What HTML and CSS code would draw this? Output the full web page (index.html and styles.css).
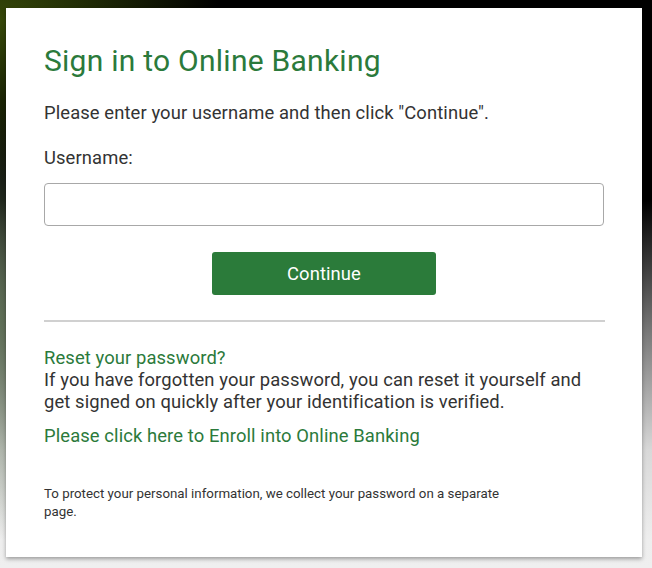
FILE: index.html
```html
<!DOCTYPE html>
<html lang="en">
<head>
<meta charset="utf-8">
<title>Sign in to Online Banking</title>
<link rel="stylesheet" href="styles.css">
</head>
<body>
<main class="card">
  <h1 class="title">Sign in to Online Banking</h1>
  <p class="intro">Please enter your username and then click "Continue".</p>
  <label class="label" for="username">Username:</label>
  <input class="field" id="username" type="text">
  <div class="actions"><button class="btn" type="button">Continue</button></div>
  <hr class="divider">
  <div class="reset">
    <a class="link" href="#">Reset your password?</a>
    <p class="reset-text">If you have forgotten your password, you can reset it yourself and get signed on quickly after your identification is verified.</p>
  </div>
  <a class="link enroll" href="#">Please click here to Enroll into Online Banking</a>
  <p class="note">To protect your personal information, we collect your password on a separate page.</p>
</main>
</body>
</html>
```
FILE: styles.css
```css
* { box-sizing: border-box; }
html, body { margin: 0; height: 100%; }
body {
  width: 652px;
  height: 568px;
  overflow: hidden;
  font-family: Roboto, "Liberation Sans", sans-serif;
  background:
    radial-gradient(ellipse 220px 160px at 0 20px, rgba(60,80,10,0.9), rgba(40,60,0,0) 100%),
    radial-gradient(ellipse 100px 220px at 0 320px, rgba(90,110,80,0.8), rgba(90,110,80,0) 100%),
    linear-gradient(to bottom, #000 0, #000 200px, #777 330px, #d8d8d8 450px, #eeeeee 540px, #efefef 568px);
  padding: 8px 10px 0 6px;
}
.card {
  background: #fff;
  width: 636px;
  height: 549px;
  padding: 33px 38px 0 38px;
  box-shadow: 0 2px 4px rgba(0,0,0,0.35);
  display: flex;
  flex-direction: column;
}
.title {
  margin: 0;
  font-weight: 400;
  font-size: 30px;
  letter-spacing: 0.25px;
  line-height: 40px;
  color: #2b7a3b;
}
.intro {
  margin: 21px 0 0;
  font-size: 18.4px;
  letter-spacing: 0.1px;
  line-height: 22px;
  color: #333;
}
.label {
  margin-top: 23px;
  font-size: 18.4px;
  letter-spacing: 0.1px;
  line-height: 22px;
  color: #333;
}
.field {
  margin-top: 14px;
  width: 560px;
  height: 43px;
  border: 1px solid #a8a8a8;
  border-radius: 4px;
  background: #fff;
}
.actions {
  display: flex;
  justify-content: center;
  margin-top: 26px;
}
.btn {
  width: 224px;
  height: 43px;
  border: none;
  border-radius: 3px;
  background: #2b7b3a;
  color: #fff;
  font-family: Roboto, "Liberation Sans", sans-serif;
  font-size: 18.4px;
  letter-spacing: 0.1px;
}
.divider {
  margin: 25px 0 0;
  width: 561px;
  border: none;
  border-top: 2px solid #d0d0d0;
  height: 0;
}
.reset { margin-top: 25px; display: flex; flex-direction: column; }
.link {
  font-size: 18.4px;
  letter-spacing: 0.1px;
  line-height: 22px;
  color: #2b7a3b;
  text-decoration: none;
}
.reset-text {
  margin: 0;
  font-size: 18.4px;
  letter-spacing: 0.1px;
  line-height: 22px;
  color: #333;
  width: 560px;
}
.enroll { margin-top: 12px; }
.note {
  margin: 38px 0 0;
  font-size: 13.3px;
  line-height: 18px;
  color: #333;
  width: 490px;
}
```
